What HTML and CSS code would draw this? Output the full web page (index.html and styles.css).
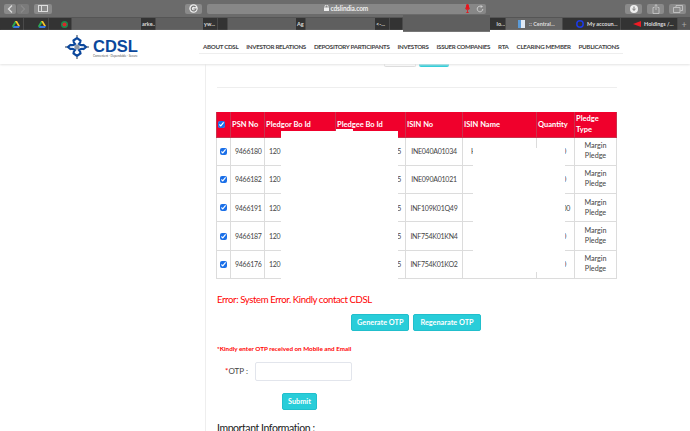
FILE: index.html
```html
<!DOCTYPE html>
<html>
<head>
<meta name="viewport" content="width=device-width, initial-scale=1">
<title>CDSL</title>
<link rel="stylesheet" href="styles.css">
</head>
<body>

<!-- browser toolbar -->
<div class="toolbar">
  <div class="navbtns">
    <span class="tbtn back"><svg width="6" height="8" viewBox="0 0 6 8"><path d="M5 .5 1.500 4 5 7.500" fill="none" stroke="#ddd" stroke-width="1.300"/></svg></span>
    <span class="tbtn fwd"><svg width="6" height="8" viewBox="0 0 6 8"><path d="M1 .5 4.500 4 1 7.500" fill="none" stroke="#8a8a8a" stroke-width="1.300"/></svg></span>
  </div>
  <span class="tbtn side"><svg width="10" height="7" viewBox="0 0 10 7"><rect x=".5" y=".5" width="9" height="6" fill="none" stroke="#ddd"/><path d="M3.500 .5v6" stroke="#ddd"/></svg></span>
  <span class="tbtn ext"><svg width="9" height="9" viewBox="0 0 9 9"><circle cx="4.500" cy="4.500" r="4.200" fill="#eee"/><path d="M6.500 3A2.400 2.400 0 1 0 7 5H4.500" fill="none" stroke="#777" stroke-width="1.200"/></svg></span>
  <div class="address">
    <span class="url"><svg width="5" height="6" viewBox="0 0 5 6"><rect y="2.500" width="5" height="3.500" fill="#eee"/><path d="M1 2.500V1.500a1.500 1.500 0 0 1 3 0v1" fill="none" stroke="#eee"/></svg> cdslindia.com</span>
    <svg class="mic" width="5" height="9" viewBox="0 0 5 9"><rect x="1" width="3" height="5.500" rx="1.500" fill="#e8141c"/><path d="M.3 3.500a2.200 2.200 0 0 0 4.400 0M2.500 6v3M1 8.700h3" fill="none" stroke="#e8141c" stroke-width=".8"/></svg>
    <svg class="reload" width="8" height="8" viewBox="0 0 8 8"><path d="M6.800 4A2.800 2.800 0 1 1 5.500 1.600" fill="none" stroke="#ccc"/><path d="M4.700 0 7 1.500 4.700 3z" fill="#ccc"/></svg>
  </div>
  <div class="tools">
    <span class="tbtn"><svg width="8" height="8" viewBox="0 0 8 8"><circle cx="4" cy="4" r="4" fill="#eee"/><path d="M4 1.500v3M2.500 3.700 4 5.500l1.500-1.800" fill="none" stroke="#777"/></svg></span>
    <span class="tbtn"><svg width="8" height="10" viewBox="0 0 8 10"><path d="M2.500 3.500H1V9.500H7V3.500H5.500M4 6V.8M2.500 2 4 .6 5.500 2" fill="none" stroke="#ccc" stroke-width=".8"/></svg></span>
    <span class="tbtn"><svg width="10" height="8" viewBox="0 0 10 8"><path d="M3 2V.5H9.500V5.500H7.500M.5 2.500H7V7.500H.5z" fill="none" stroke="#ccc" stroke-width=".8"/></svg></span>
  </div>
</div>

<!-- browser tabs -->
<div class="tabs">
  <span class="tab dark w24"><svg width="8" height="7" viewBox="0 0 8 7"><path d="M3 0h2L2 5.500 1 7 0 5z" fill="#2da94f"/><path d="M3 0h2l3 5H6z" fill="#f7c52b"/><path d="M2 5h6L7 7H1z" fill="#3777e3"/></svg></span>
  <span class="tab dark w25"><svg width="8" height="7" viewBox="0 0 8 7"><path d="M3 0h2L2 5.500 1 7 0 5z" fill="#2da94f"/><path d="M3 0h2l3 5H6z" fill="#f7c52b"/><path d="M2 5h6L7 7H1z" fill="#3777e3"/></svg></span>
  <span class="tab dark w23"><svg width="7" height="7" viewBox="0 0 7 7"><circle cx="3.500" cy="3.500" r="3.500" fill="#1d8a4c"/><circle cx="3.500" cy="3.500" r="2" fill="#d8262c"/></svg></span>
  <span class="tab gray w69"></span>
  <span class="tab dark w15">arke...</span>
  <span class="tab gray w47"></span>
  <span class="tab dark w15">yw...</span>
  <span class="tab dark w10"></span>
  <span class="tab gray w68"></span>
  <span class="tab dark w10">Ag</span>
  <span class="tab gray w69"></span>
  <span class="tab dark w15">&lt;-...</span>
  <span class="tab dark w13"></span>
  <span class="tab gray w87"></span>
  <span class="tab dark w16 right">lo...</span>
  <span class="tab active w57"><svg width="7" height="8" viewBox="0 0 7 8"><rect width="7" height="8" fill="#dfe9f5"/><rect width="3" height="8" fill="#5b9bd8"/></svg> :: Central...</span>
  <span class="tab dark w58"><svg width="8" height="8" viewBox="0 0 8 8"><circle cx="4" cy="4" r="3.200" fill="none" stroke="#1c3be8" stroke-width="1.500"/></svg> My accoun...</span>
  <span class="tab dark w56"><svg width="8" height="6" viewBox="0 0 8 6"><path d="M0 3 8 0V6z" fill="#ee1c25"/></svg> Holdings /...</span>
  <span class="tab newtab">+</span>
  <span class="tabcover"></span>
</div>

<!-- site header -->
<div class="header">
  <div class="logo">
    <svg width="24" height="24" viewBox="0 0 24 24">
      <g fill="none" stroke="#0b479c" stroke-width="2.200">
        <path d="M8.500 5.500 12 3l3.500 2.500c0 2-1 3-1.500 3.500 1 1 2.500 1.500 4.500 1L21 12l-2.500 2c-2-.5-3.500 0-4.500 1 .5.500 1.500 1.500 1.500 3.500L12 21l-3.500-2.500c0-2 1-3 1.500-3.500-1-1-2.500-1.500-4.500-1L3 12l2.500-2c2 .5 3.500 0 4.500-1-.5-.5-1.500-1.500-1.500-3.500z"/>
      </g>
      <circle cx="12" cy="12" r="2.600" fill="#8d97a6"/>
      <circle cx="12" cy="1" r="1" fill="#6d7888"/>
      <circle cx="12" cy="23" r="1" fill="#6d7888"/>
      <circle cx="1" cy="12" r="1" fill="#6d7888"/>
      <circle cx="23" cy="12" r="1" fill="#6d7888"/>
    </svg>
    <div class="logotext">
      <div class="logoname">CDSL</div>
      <div class="tagline">Convenient · Dependable · Secure</div>
    </div>
  </div>
  <ul class="menu">
    <li>ABOUT CDSL</li>
    <li>INVESTOR RELATIONS</li>
    <li>DEPOSITORY PARTICIPANTS</li>
    <li>INVESTORS</li>
    <li>ISSUER COMPANIES</li>
    <li>RTA</li>
    <li>CLEARING MEMBER</li>
    <li>PUBLICATIONS</li>
  </ul>
</div>

<div class="page">
  <div class="content">
    <div class="topbtns">
      <span class="stub plain"></span>
      <span class="stub teal"></span>
    </div>
    <hr class="line">

    <div class="tablewrap">
      <table class="pledges">
        <colgroup>
          <col class="c1"><col class="c2"><col class="c3"><col class="c4"><col class="c5"><col class="c6"><col class="c7"><col class="c8">
        </colgroup>
        <thead>
          <tr>
            <th class="chk"><input type="checkbox" checked></th>
            <th>PSN No</th>
            <th>Pledgor Bo Id</th>
            <th>Pledgee Bo Id</th>
            <th>ISIN No</th>
            <th>ISIN Name</th>
            <th>Quantity</th>
            <th>Pledge Type</th>
          </tr>
        </thead>
        <tbody>
          <tr>
            <td class="chk"><input type="checkbox" checked></td>
            <td class="mid">9466180</td>
            <td>120</td>
            <td class="end">5</td>
            <td class="mid">INE040A01034</td>
            <td class="name">H</td>
            <td class="end qty">0</td>
            <td class="mid type">Margin Pledge</td>
          </tr>
          <tr>
            <td class="chk"><input type="checkbox" checked></td>
            <td class="mid">9466182</td>
            <td>120</td>
            <td class="end">5</td>
            <td class="mid">INE090A01021</td>
            <td class="name"></td>
            <td class="end qty">0</td>
            <td class="mid type">Margin Pledge</td>
          </tr>
          <tr>
            <td class="chk"><input type="checkbox" checked></td>
            <td class="mid">9466191</td>
            <td>120</td>
            <td class="end">5</td>
            <td class="mid">INF109K01Q49</td>
            <td class="name"></td>
            <td class="end">00</td>
            <td class="mid type">Margin Pledge</td>
          </tr>
          <tr>
            <td class="chk"><input type="checkbox" checked></td>
            <td class="mid">9466187</td>
            <td>120</td>
            <td class="end">5</td>
            <td class="mid">INF754K01KN4</td>
            <td class="name"></td>
            <td class="end qty">0</td>
            <td class="mid type">Margin Pledge</td>
          </tr>
          <tr>
            <td class="chk"><input type="checkbox" checked></td>
            <td class="mid">9466176</td>
            <td>120</td>
            <td class="end">5</td>
            <td class="mid">INF754K01KO2</td>
            <td class="name"></td>
            <td class="end qty">0</td>
            <td class="mid type">Margin Pledge</td>
          </tr>
        </tbody>
      </table>
      <!-- blanked out parts of the screenshot -->
      <span class="blank blank1"></span>
      <span class="blank blank1b"></span>
      <span class="blank blank2"></span>
    </div>

    <p class="error">Error: System Error. Kindly contact CDSL</p>

    <div class="otpbtns">
      <button class="btn">Generate OTP</button>
      <button class="btn regen">Regenarate OTP</button>
    </div>

    <p class="note">*Kindly enter OTP received on Mobile and Email</p>

    <div class="otprow">
      <label class="otplabel"><span class="star">*</span>OTP :</label>
      <input class="otpinput" type="text">
    </div>

    <div class="submitrow">
      <button class="btn">Submit</button>
    </div>

    <h3 class="info">Important Information :</h3>
  </div>
</div>

</body>
</html>
```

FILE: styles.css
```css
* {
  box-sizing: border-box;
}

html, body {
  height: 431px;
  overflow: hidden;
}

body {
  margin: 0;
  font-family: Lato, "Liberation Sans", sans-serif;
  background: #fff;
  color: #444;
}

/* Browser toolbar */
.toolbar {
  display: flex;
  align-items: center;
  height: 18px;
  padding: 0 4px;
  background: #6b6b6b;
  border-bottom: 1px solid #555;
}

.tbtn {
  display: flex;
  align-items: center;
  justify-content: center;
  width: 18px;
  height: 10px;
  background: #8a8a8a;
  border-radius: 2px;
}

.navbtns {
  display: flex;
  gap: 1px;
}

.back, .fwd {
  width: 12px;
}

.fwd {
  background: #7a7a7a;
}

.side {
  margin-left: 5px;
}

.ext {
  margin-left: 133px;
  width: 17px;
}

.address {
  display: flex;
  align-items: center;
  width: 279px;
  height: 10px;
  margin-left: 5px;
  background: #878787;
  border-radius: 2px;
  position: relative;
}

.url {
  margin-left: 117px;
  font-size: 6.500px;
  font-weight: 700;
  letter-spacing: -.1px;
  color: #eee;
}

.mic {
  margin-left: auto;
}

.reload {
  margin: 0 2px 0 6px;
}

.tools {
  display: flex;
  gap: 5px;
  margin-left: auto;
}

.tools .tbtn {
  width: 17px;
}

/* Browser tabs */
.tabs {
  display: flex;
  height: 12px;
  background: #5f5f5f;
  font-size: 5.500px;
  font-weight: 700;
  color: #ddd;
  position: relative;
}

.tab {
  display: flex;
  align-items: center;
  gap: 3px;
  overflow: hidden;
  white-space: nowrap;
  border-right: 1px solid #4a4a4a;
}

.dark {
  background: #333;
  padding-left: 1px;
}

.dark svg {
  margin-left: 11px;
}

.gray {
  background: #5f5f5f;
  border-right: 0;
}

.active {
  background: #666;
  padding-left: 12px;
}

.active svg {
  margin-right: 1px;
}

.right {
  justify-content: flex-end;
}

.newtab {
  flex: 1;
  justify-content: center;
  background: #555;
  font-size: 9px;
  font-weight: 400;
  color: #aaa;
  border: 0;
}

.w10 { width: 10px; }
.w13 { width: 13px; }
.w15 { width: 15px; }
.w16 { width: 16px; }
.w23 { width: 23px; }
.w24 { width: 24px; }
.w25 { width: 25px; }
.w47 { width: 47px; }
.w56 { width: 57px; }
.w57 { width: 57px; }
.w58 { width: 58px; }
.w68 { width: 68px; }
.w69 { width: 69px; }
.w87 { width: 87px; }

.w25 svg { margin-left: 13px; }
.w58 svg { margin-left: 12px; }

.tabcover {
  position: absolute;
  left: 403px;
  top: -3px;
  width: 87px;
  height: 17px;
  background: #5f5f5f;
  border-bottom: 1px solid #777;
  z-index: 3;
}

/* Site header */
.header {
  display: flex;
  height: 34px;
  background: #fff;
  box-shadow: 0 1px 2px #e4e4e4;
  position: relative;
  z-index: 2;
}

.logo {
  display: flex;
  align-items: center;
  gap: 4px;
  margin-left: 65px;
  width: 134px;
}

.logotext {
  color: #0b479c;
}

.logoname {
  font-family: "Liberation Sans", Arial, sans-serif;
  font-size: 16.500px;
  font-weight: 700;
  line-height: 15px;
  margin-top: 3px;
}

.tagline {
  font-size: 3px;
  line-height: 4px;
  color: #555;
  white-space: nowrap;
}

.menu {
  display: flex;
  gap: 8px;
  list-style: none;
  margin: 0;
  padding: 0 4px 3px;
  height: 24px;
  align-items: flex-end;
  border-bottom: 1px solid #eee;
  font-size: 6.200px;
  font-weight: 700;
  letter-spacing: -.31px;
  color: #444;
  white-space: nowrap;
}

/* Page */
.page {
  height: 367px;
  overflow: hidden;
}

.content {
  margin-left: 205px;
  padding: 0 73px 0 11px;
  height: 367px;
  border-left: 1px solid #eee;
}

.topbtns {
  display: flex;
  gap: 3px;
  height: 3px;
  margin-left: 167px;
}

.stub {
  height: 3px;
  border-radius: 0 0 2px 2px;
}

.plain {
  width: 32px;
  border: 1px solid #ddd;
  border-top: 0;
}

.teal {
  width: 30px;
  background: #29cdd9;
}

.line {
  border: 0;
  border-top: 1px solid #eee;
  margin: 20px 0 24px;
}

.tablewrap {
  position: relative;
  margin-left: -1px;
}

.pledges {
  width: 400px;
  table-layout: fixed;
  border-collapse: collapse;
  font-size: 7px;
  letter-spacing: -.25px;
}

.c1 { width: 14px; }
.c2 { width: 34px; }
.c3 { width: 71px; }
.c4 { width: 70px; }
.c5 { width: 57px; }
.c6 { width: 74px; }
.c7 { width: 38px; }
.c8 { width: 42px; }

.pledges th {
  height: 25px;
  padding: 0 1px;
  background: #f0002c;
  border: 1px solid #c9324c;
  border-top: 0;
  color: #fff;
  font-size: 7.500px;
  font-weight: 700;
  letter-spacing: 0;
  line-height: 11.500px;
  text-align: left;
}

.pledges td {
  height: 28.300px;
  padding: 0 4px;
  border: 1px solid #dcdcdc;
  line-height: 10px;
  color: #444;
}

.pledges input {
  display: block;
  width: 7px;
  height: 7px;
  margin: 0 auto;
  accent-color: #1a6fe8;
}

.pledges th.chk, .pledges td.chk {
  padding: 0;
}

.pledges th.chk input {
  margin-left: 1px;
}

.pledges td.mid {
  text-align: center;
}

.pledges td.type {
  font-size: 7.200px;
  letter-spacing: 0;
}

.pledges td.end {
  text-align: right;
}

.pledges td.qty {
  padding-right: 8px;
}

.pledges td.name {
  padding-left: 8px;
}

.blank {
  position: absolute;
  background: #fff;
}

.blank1 {
  left: 65px;
  top: 19px;
  width: 117px;
  height: 148px;
}

.blank1b {
  left: 120px;
  top: 17px;
  width: 17px;
  height: 3px;
}

.blank2 {
  left: 257px;
  top: 36px;
  width: 92px;
  height: 124px;
}

.error {
  margin: 14px 0 0;
  font-size: 9.600px;
  letter-spacing: -.4px;
  line-height: 13px;
  color: #f00;
}

.otpbtns {
  display: flex;
  gap: 4px;
  margin: 8px 0 0 134px;
}

.btn {
  height: 17px;
  padding: 0 5px;
  background: #29cdd9;
  border: 1px solid #21bfcc;
  border-radius: 2px;
  color: #fff;
  font-family: Lato, "Liberation Sans", sans-serif;
  font-size: 7.300px;
  font-weight: 700;
}

.regen {
  padding: 0 6px;
}

.note {
  margin: 14px 0 0;
  font-size: 6.300px;
  line-height: 8px;
  font-weight: 700;
  color: #f00;
}

.otprow {
  display: flex;
  align-items: center;
  margin-top: 9px;
}

.otplabel {
  width: 38px;
  padding-left: 8px;
  font-size: 8px;
  color: #444;
  white-space: nowrap;
}

.star {
  color: #f00;
}

.otpinput {
  width: 97px;
  height: 19px;
  border: 1px solid #e2e5ec;
  border-radius: 2px;
  background: #fff;
}

.submitrow {
  display: flex;
  margin: 12px 0 0 65px;
}

.info {
  margin: 11px 0 0;
  font-size: 10.500px;
  letter-spacing: -.43px;
  line-height: 14px;
  font-weight: 400;
  color: #222;
}
```
